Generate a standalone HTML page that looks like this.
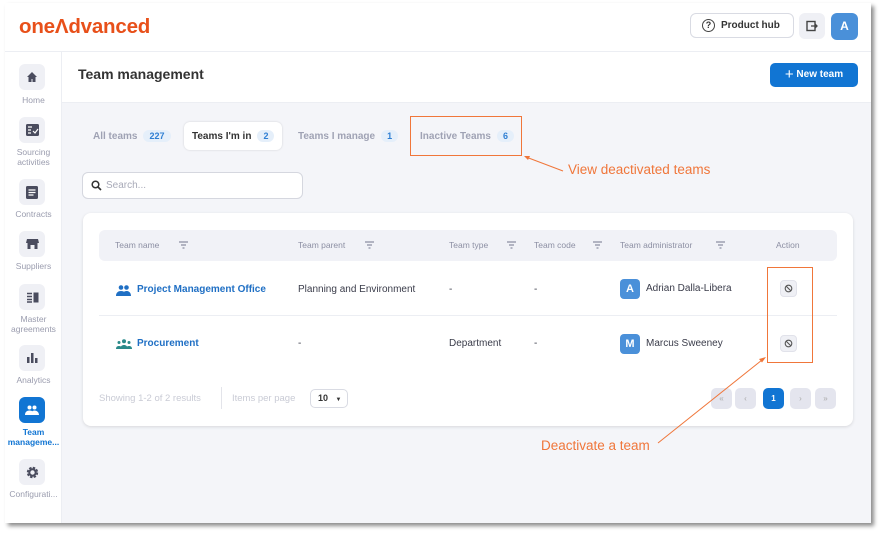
<!DOCTYPE html>
<html><head><meta charset="utf-8"><style>
*{box-sizing:border-box;margin:0;padding:0}
body{width:884px;height:537px;background:#fff;font-family:"Liberation Sans",sans-serif;position:relative;overflow:hidden}
.frame{position:absolute;left:5px;top:3px;width:866px;height:520px;background:#f4f5f9;box-shadow:3px 3px 4px rgba(0,0,0,.45);overflow:hidden}
.a{position:absolute}
.hdr{left:0;top:0;width:866px;height:49px;background:#fff;border-bottom:1px solid #eceef3}
.side{left:0;top:49px;width:57px;height:471px;background:#fff;border-right:1px solid #eceef3}
.ib{position:absolute;left:14px;width:26px;height:26px;border-radius:6px;background:#eff0f5;display:flex;align-items:center;justify-content:center}
.lbl{position:absolute;left:0;width:57px;text-align:center;font-size:8.5px;color:#9a9cae;line-height:10px}
.title{left:57px;top:49px;width:809px;height:51px;background:#fff;border-bottom:1px solid #eceef3}
.tab{position:absolute;font-size:10px;font-weight:bold;color:#9fa2b4;display:flex;align-items:center;gap:6px;height:28px}
.bd{background:#e5effa;color:#2f7fd3;font-size:9px;border-radius:8px;padding:1px 6px;font-weight:bold}
.th{position:absolute;top:0;height:31px;line-height:31px;font-size:8.5px;color:#8c8fa3}
.td{position:absolute;font-size:10px;color:#3a3c4a}
.pg{position:absolute;top:175px;width:21px;height:21px;border-radius:5px;background:#e4e5ee;font-size:8px;color:#aaa;text-align:center;line-height:21px}
.or{color:#f0763a;font-size:13.5px;font-family:"Liberation Sans",sans-serif}
</style></head><body>
<div class="frame">
 <div class="a hdr">
  <div class="a" style="left:14px;top:12px;font-size:20.5px;font-weight:bold;color:#e8501a;letter-spacing:-0.2px">one&#923;dvanced</div>
  <div class="a" style="left:685px;top:10px;width:104px;height:25px;border:1px solid #d9dbe3;border-radius:6px;font-size:10px;font-weight:bold;color:#333;display:flex;align-items:center;padding-left:11px;gap:6px"><span style="width:13px;height:13px;border:1.3px solid #444;border-radius:50%;font-size:9px;line-height:11px;text-align:center">?</span>Product hub</div>
  <div class="a" style="left:794px;top:10px;width:26px;height:26px;border-radius:6px;background:#eff0f5;display:flex;align-items:center;justify-content:center"><svg width="12" height="12" viewBox="0 0 12 12"><rect x="1" y="1.5" width="8" height="9" fill="none" stroke="#444" stroke-width="1.4"/><path d="M5 6h6M9 4l2 2-2 2" stroke="#444" stroke-width="1.3" fill="none"/></svg></div>
  <div class="a" style="left:826px;top:10px;width:27px;height:27px;border-radius:6px;background:#4a90d9;color:#fff;font-weight:bold;font-size:12px;text-align:center;line-height:27px">A</div>
 </div>
 <div class="a side">
  <div class="ib" style="top:12px"><svg width="12" height="12" viewBox="0 0 12 12"><path d="M6 1L1 6h1.5v5h3V8h1v3h3V6H11z" fill="#4a4c5e"/></svg></div><div class="lbl" style="top:43px">Home</div>
  <div class="ib" style="top:65px"><svg width="13" height="12"><rect width="13" height="12" rx="1.5" fill="#4a4c5e"/><path d="M2 3h4M2 6h3M2 9h3M7 7l2 2 3-4" stroke="#fff" stroke-width="1.2" fill="none"/></svg></div><div class="lbl" style="top:95px">Sourcing<br>activities</div>
  <div class="ib" style="top:127px"><svg width="12" height="13"><rect width="12" height="13" rx="1.5" fill="#4a4c5e"/><path d="M2.5 4h7M2.5 6.5h7M2.5 9h5" stroke="#fff" stroke-width="1.2"/></svg></div><div class="lbl" style="top:157px">Contracts</div>
  <div class="ib" style="top:179px"><svg width="13" height="12"><path d="M1 1h11l1 4H0z" fill="#4a4c5e"/><rect x="1.5" y="5" width="10" height="6" fill="#4a4c5e"/><rect x="4.5" y="7" width="4" height="4" fill="#eff0f5"/></svg></div><div class="lbl" style="top:209px">Suppliers</div>
  <div class="ib" style="top:232px"><svg width="13" height="11"><path d="M1 1.5h5M1 4.5h5M1 7.5h5M1 10h5" stroke="#4a4c5e" stroke-width="1.4"/><rect x="7.5" y="0.5" width="5" height="10" fill="#4a4c5e"/></svg></div><div class="lbl" style="top:262px">Master<br>agreements</div>
  <div class="ib" style="top:293px"><svg width="12" height="12"><rect x="1" y="5" width="2.5" height="6" fill="#4a4c5e"/><rect x="5" y="1" width="2.5" height="10" fill="#4a4c5e"/><rect x="9" y="6" width="2.5" height="5" fill="#4a4c5e"/></svg></div><div class="lbl" style="top:323px">Analytics</div>
  <div class="ib" style="top:345px;background:#1175d3"><svg width="14" height="10"><circle cx="4.5" cy="2.5" r="2" fill="#fff"/><circle cx="9.5" cy="2.5" r="2" fill="#fff"/><path d="M0 10c0-3 2-4.5 4.5-4.5S9 7 9 10zM6 10c0-3 1.5-4.5 3.5-4.5S14 7 14 10z" fill="#fff"/></svg></div><div class="lbl" style="top:375px;color:#1175d3;font-weight:bold">Team<br>manageme...</div>
  <div class="ib" style="top:407px"><svg width="13" height="13" viewBox="0 0 13 13"><circle cx="6.5" cy="6.5" r="4.3" fill="none" stroke="#4a4c5e" stroke-width="2.8" stroke-dasharray="2.2 1.2"/><circle cx="6.5" cy="6.5" r="3.2" fill="none" stroke="#4a4c5e" stroke-width="2"/></svg></div><div class="lbl" style="top:437px">Configurati...</div>
 </div>
 <div class="a title">
  <div class="a" style="left:16px;top:14px;font-size:14px;font-weight:bold;color:#333">Team management</div>
  <div class="a" style="left:708px;top:11px;width:88px;height:24px;border-radius:5px;background:#1175d3;color:#fff;font-size:10px;font-weight:bold;line-height:24px;text-align:center"><span style="font-size:15px;font-weight:normal;vertical-align:-2px">+</span> New team</div>
 </div>
 <div class="tab" style="left:88px;top:119px">All teams <span class="bd">227</span></div>
 <div class="tab" style="left:179px;top:119px;background:#fff;border-radius:6px;padding:0 8px;color:#333;box-shadow:0 0 2px rgba(0,0,0,.15)">Teams I'm in <span class="bd">2</span></div>
 <div class="tab" style="left:293px;top:119px">Teams I manage <span class="bd">1</span></div>
 <div class="tab" style="left:415px;top:119px">Inactive Teams <span class="bd">6</span></div>
 <div class="a" style="left:405px;top:113px;width:112px;height:40px;border:1.3px solid #f0763a"></div>
 <div class="a or" style="left:563px;top:159px">View deactivated teams</div>
 <div class="a" style="left:77px;top:169px;width:221px;height:27px;background:#fff;border:1px solid #d5d7df;border-radius:6px;font-size:10px;color:#a8aab8;line-height:25px;padding-left:23px">Search...<svg class="a" style="left:8px;top:7px" width="11" height="11"><circle cx="4.5" cy="4.5" r="3.3" fill="none" stroke="#333" stroke-width="1.5"/><path d="M7 7l3 3" stroke="#333" stroke-width="1.6"/></svg></div>
 <div class="a" style="left:78px;top:210px;width:770px;height:213px;background:#fff;border-radius:8px;box-shadow:0 1px 3px rgba(0,0,0,.12)">
  <div class="a" style="left:16px;top:17px;width:738px;height:31px;background:#f1f2f7;border-radius:6px">
   <div class="th" style="left:16px">Team name</div><div class="th" style="left:199px">Team parent</div><div class="th" style="left:350px">Team type</div><div class="th" style="left:435px">Team code</div><div class="th" style="left:521px">Team administrator</div><div class="th" style="left:677px">Action</div>
   <svg class="a" style="left:0;top:0" width="738" height="31"><g stroke="#8c8fa3" stroke-width="1.2"><path d="M80 12h9M82 15h5M83.5 18h2M266 12h9M268 15h5M269.5 18h2M408 12h9M410 15h5M411.5 18h2M494 12h9M496 15h5M497.5 18h2M617 12h9M619 15h5M620.5 18h2"/></g></svg>
  </div>
  <svg class="a" style="left:33px;top:72px" width="15" height="11"><circle cx="5" cy="2.5" r="2.3" fill="#1f6fc4"/><circle cx="10.5" cy="2.5" r="2.3" fill="#1f6fc4"/><path d="M0 11c0-3.5 2.3-5 5-5s5 1.5 5 5zM6.5 11c0-3.5 1.8-5 4-5s4.5 1.5 4.5 5z" fill="#1f6fc4"/></svg>
  <div class="td" style="left:54px;top:71px;color:#1f6fc4;font-weight:bold">Project Management Office</div>
  <div class="td" style="left:215px;top:71px">Planning and Environment</div>
  <div class="td" style="left:366px;top:71px">-</div><div class="td" style="left:451px;top:71px">-</div>
  <div class="a" style="left:537px;top:66px;width:20px;height:20px;border-radius:4px;background:#4a90d9;color:#fff;font-weight:bold;font-size:11px;text-align:center;line-height:20px">A</div>
  <div class="td" style="left:563px;top:70px">Adrian Dalla-Libera</div>
  <div class="a" style="left:697px;top:67px;width:17px;height:17px;border-radius:4px;background:#eff0f5;border:1px solid #e1e2ea"><svg class="a" style="left:3px;top:3px" width="9" height="9"><circle cx="4.5" cy="4.5" r="3.3" fill="none" stroke="#555" stroke-width="1.1"/><path d="M2 2l5 5" stroke="#555" stroke-width="1.1"/></svg></div>
  <div class="a" style="left:16px;top:102px;width:738px;height:1px;background:#eceef3"></div>
  <svg class="a" style="left:33px;top:126px" width="16" height="10"><circle cx="8" cy="2.3" r="2" fill="#2a8a8a"/><circle cx="3" cy="3.5" r="1.5" fill="#2a8a8a"/><circle cx="13" cy="3.5" r="1.5" fill="#2a8a8a"/><path d="M4.5 10c0-3 1.5-4 3.5-4s3.5 1 3.5 4zM0 10c0-2 1-3 3-3s3 1 3 3zM10 10c0-2 1-3 3-3s3 1 3 3z" fill="#2a8a8a"/></svg>
  <div class="td" style="left:54px;top:125px;color:#1f6fc4;font-weight:bold">Procurement</div>
  <div class="td" style="left:215px;top:125px">-</div>
  <div class="td" style="left:366px;top:125px">Department</div><div class="td" style="left:451px;top:125px">-</div>
  <div class="a" style="left:537px;top:121px;width:20px;height:20px;border-radius:4px;background:#4a90d9;color:#fff;font-weight:bold;font-size:11px;text-align:center;line-height:20px">M</div>
  <div class="td" style="left:563px;top:125px">Marcus Sweeney</div>
  <div class="a" style="left:697px;top:122px;width:17px;height:17px;border-radius:4px;background:#eff0f5;border:1px solid #e1e2ea"><svg class="a" style="left:3px;top:3px" width="9" height="9"><circle cx="4.5" cy="4.5" r="3.3" fill="none" stroke="#555" stroke-width="1.1"/><path d="M2 2l5 5" stroke="#555" stroke-width="1.1"/></svg></div>
  <div class="td" style="left:16px;top:180px;color:#c9cbd5;font-size:9.5px">Showing 1-2 of 2 results</div>
  <div class="a" style="left:138px;top:174px;width:1px;height:22px;background:#e3e4ea"></div>
  <div class="td" style="left:149px;top:180px;color:#c9cbd5;font-size:9.5px">Items per page</div>
  <div class="a" style="left:227px;top:176px;width:38px;height:19px;border:1px solid #d9dbe3;border-radius:5px;font-size:9px;font-weight:bold;line-height:17px;padding-left:7px;color:#333">10 <span style="font-size:6px;margin-left:5px">▼</span></div>
  <div class="pg" style="left:628px">«</div><div class="pg" style="left:652px">‹</div>
  <div class="pg" style="left:680px;background:#1175d3;color:#fff;font-weight:bold">1</div>
  <div class="pg" style="left:707px">›</div><div class="pg" style="left:732px">»</div>
 </div>
 <div class="a" style="left:762px;top:264px;width:46px;height:96px;border:1.3px solid #f0763a"></div>
 <div class="a or" style="left:536px;top:435px">Deactivate a team</div>
 <svg class="a" style="left:0;top:0" width="866" height="520"><path d="M558 168L521 154" stroke="#f0763a" stroke-width="1"/><path d="M519 153l6 0-2 4z" fill="#f0763a"/><path d="M653 440L757 357" stroke="#f0763a" stroke-width="1"/><path d="M761 354l-7 2 3 3.5z" fill="#f0763a"/></svg>
</div>
</body></html>
